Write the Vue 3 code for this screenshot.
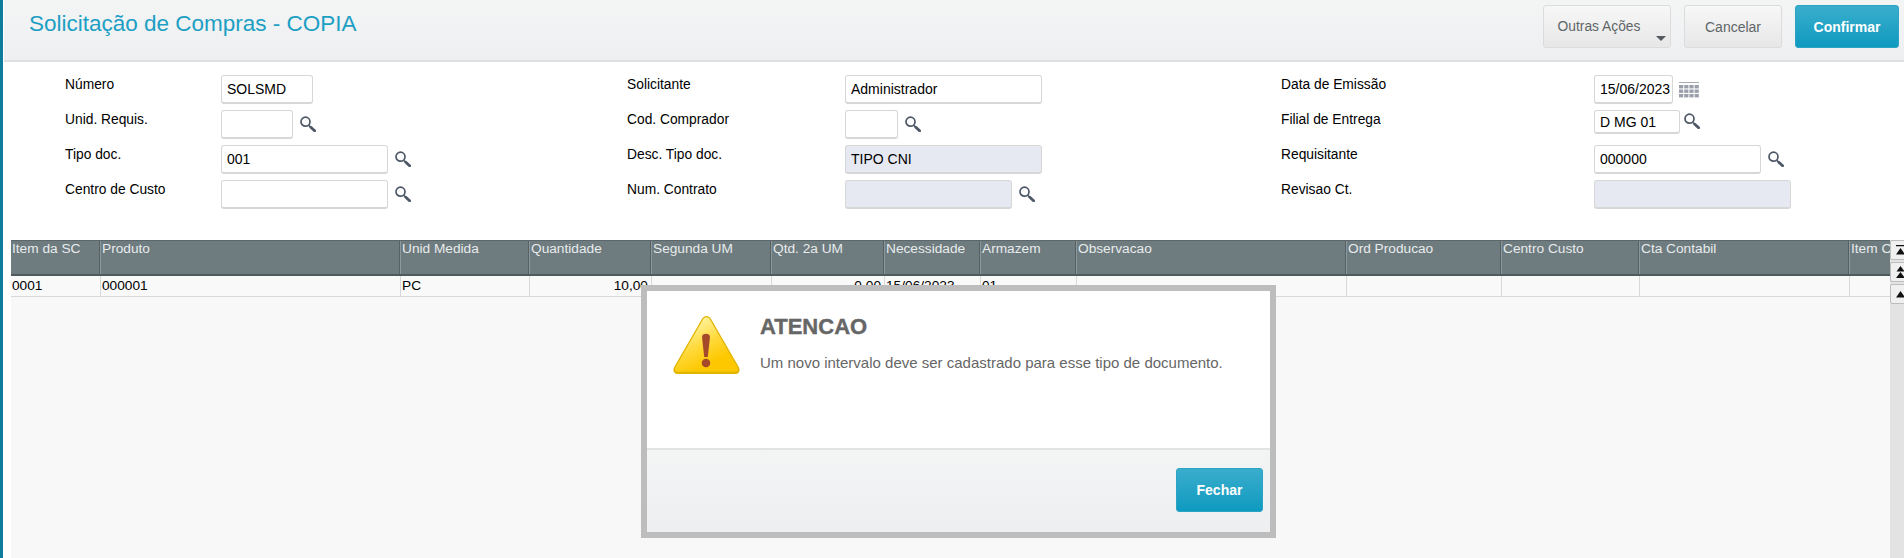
<template>
  <div class="page">
    <div class="side"></div>
    <div class="main">
      <header class="top">
        <h1 class="title">Solicitação de Compras - COPIA</h1>
        <div class="actions">
          <button class="btn more">
            Outras Ações
            <span class="caret"></span>
          </button>
          <button class="btn cancel">Cancelar</button>
          <button class="btn primary confirm">Confirmar</button>
        </div>
      </header>

      <section class="form">
        <div v-for="col in columns" :key="col.name" class="col" :class="col.name">
          <div v-for="f in col.fields" :key="f.label" class="field">
            <label>{{ f.label }}</label>
            <div class="ctl">
              <input
                type="text"
                :class="{ off: f.off, short: f.short }"
                :style="{ width: f.w + 'px' }"
                :value="f.value"
                :readonly="f.off"
              />
              <svg v-if="f.search" class="lens" :class="{ up: f.short }" viewBox="0 0 16 16" width="16" height="16">
                <circle cx="5.500" cy="5.700" r="4.500" fill="#fdfdfe" stroke="#4d5766" stroke-width="1.700" />
                <path d="M8.800 9.400 10.500 11" stroke="#4d5766" stroke-width="1.600" />
                <path d="M10.800 11.200 14.600 14.800" stroke="#4d5766" stroke-width="2.800" stroke-linecap="round" />
              </svg>
              <svg v-if="f.calendar" class="cal" viewBox="0 0 20 16" width="20" height="16">
                <rect x="0" y="0" width="20" height="1" fill="#a6aab5" />
                <g fill="#9a9fab">
                  <template v-for="r in [3, 7.5, 12]" :key="r">
                    <rect v-for="c in [0, 5.2, 10.4, 15.6]" :key="c" :x="c" :y="r" width="4.2" height="3.4" />
                  </template>
                </g>
              </svg>
            </div>
          </div>
        </div>
      </section>

      <section class="grid-wrap">
        <div class="grid">
          <div class="row head">
            <div v-for="c in gridCols" :key="c.t" class="cell">{{ c.t }}</div>
          </div>
          <div class="row body">
            <div v-for="c in gridCols" :key="c.t" class="cell" :class="{ num: c.num }">{{ c.v }}</div>
          </div>
        </div>
        <div class="scroll">
          <button class="sb">
            <svg viewBox="0 0 9 10" width="9" height="10"><path d="M0 0h9v1.300H0zM4.500 3 9 9.500H0z" fill="#111" /></svg>
          </button>
          <button class="sb">
            <svg viewBox="0 0 9 12" width="9" height="12"><path d="M4.500 0 8.500 5.500h-8zM4.500 6 9 12H0z" fill="#111" /></svg>
          </button>
          <button class="sb">
            <svg viewBox="0 0 9 7" width="9" height="7"><path d="M4.500 0 9 6.500H0z" fill="#111" /></svg>
          </button>
        </div>
      </section>
    </div>

    <div class="modal">
      <div class="modal-body">
        <svg class="warn" viewBox="0 0 67 58" width="67" height="58" preserveAspectRatio="none">
          <defs>
            <linearGradient id="warnFill" x1="0.25" y1="0.1" x2="0.65" y2="0.8">
              <stop offset="0" stop-color="#fff3a0" />
              <stop offset="0.55" stop-color="#ffd93a" />
              <stop offset="1" stop-color="#fdc800" />
            </linearGradient>
          </defs>
          <path d="M33.500 0c2.200 0 3.700 1.300 4.700 3.200L65.800 51c1.800 3.500.4 7-3.300 7H4.500c-3.700 0-5.100-3.500-3.300-7L28.800 3.200C29.800 1.300 31.300 0 33.500 0z" fill="#e2b400" />
          <path d="M33.500 1.300c1.700 0 2.900 1.100 3.700 2.600L64.300 51c1.400 2.700.5 4.800-2.400 4.800H5.100c-2.900 0-3.800-2.100-2.400-4.800L29.800 3.900c.8-1.500 2-2.600 3.700-2.600z" fill="url(#warnFill)" />
          <path d="M29 21c0-2.300 2-3.200 4-3.200s4 .9 4 3.200L34.800 41h-3.600z" fill="#a4492a" />
          <circle cx="33" cy="47" r="4.300" fill="#a4492a" />
        </svg>
        <div class="msg">
          <h2>ATENCAO</h2>
          <p>Um novo intervalo deve ser cadastrado para esse tipo de documento.</p>
        </div>
      </div>
      <div class="modal-foot">
        <button class="btn primary close">Fechar</button>
      </div>
    </div>
  </div>
</template>

<script setup>
const columns = [
  {
    name: 'c1',
    fields: [
      { label: 'Número', value: 'SOLSMD', w: 92 },
      { label: 'Unid. Requis.', value: '', w: 72, search: true },
      { label: 'Tipo doc.', value: '001', w: 167, search: true },
      { label: 'Centro de Custo', value: '', w: 167, search: true }
    ]
  },
  {
    name: 'c2',
    fields: [
      { label: 'Solicitante', value: 'Administrador', w: 197 },
      { label: 'Cod. Comprador', value: '', w: 53, search: true },
      { label: 'Desc. Tipo doc.', value: 'TIPO CNI', w: 197, off: true },
      { label: 'Num. Contrato', value: '', w: 167, off: true, search: true }
    ]
  },
  {
    name: 'c3',
    fields: [
      { label: 'Data de Emissão', value: '15/06/2023', w: 79, calendar: true },
      { label: 'Filial de Entrega', value: 'D MG 01', w: 86, search: true, short: true },
      { label: 'Requisitante', value: '000000', w: 167, search: true },
      { label: 'Revisao Ct.', value: '', w: 197, off: true }
    ]
  }
]

const gridCols = [
  { t: 'Item da SC', v: '0001' },
  { t: 'Produto', v: '000001' },
  { t: 'Unid Medida', v: 'PC' },
  { t: 'Quantidade', v: '10,00', num: true },
  { t: 'Segunda UM', v: '' },
  { t: 'Qtd. 2a UM', v: '0,00', num: true },
  { t: 'Necessidade', v: '15/06/2023' },
  { t: 'Armazem', v: '01' },
  { t: 'Observacao', v: '' },
  { t: 'Ord Producao', v: '' },
  { t: 'Centro Custo', v: '' },
  { t: 'Cta Contabil', v: '' },
  { t: 'Item C', v: '' }
]
</script>

<style>
html,
body {
  margin: 0;
  background: #fff;
  overflow: hidden;
}
</style>

<style scoped>
.page {
  position: relative;
  display: flex;
  height: 558px;
  font-family: "Liberation Sans", Arial, sans-serif;
  font-size: 14px;
  color: #000;
  overflow: hidden;
}

.side {
  width: 3px;
  background: #0e7c9b;
  margin-right: 1px;
  flex: none;
}

.main {
  flex: 1;
  min-width: 0;
  display: flex;
  flex-direction: column;
}

.top {
  display: flex;
  justify-content: space-between;
  height: 60px;
  border-bottom: 2px solid #dfe0e0;
  background: linear-gradient(#f3f5f5, #eeeff1);
}

.title {
  margin: 10px 0 0 25px;
  font-size: 22.500px;
  font-weight: 400;
  line-height: 28px;
  color: #1d9fc4;
}

.actions {
  display: flex;
  gap: 13px;
  padding: 5px 5px 0 0;
}

.btn {
  height: 43px;
  box-sizing: border-box;
  border: 1px solid #dcdcdc;
  border-radius: 3px;
  background: linear-gradient(#f7f7f7, #e7e7e7);
  color: #5f6668;
  font-family: inherit;
  font-size: 14px;
  padding: 0;
}

.btn.more {
  position: relative;
  width: 128px;
  padding-right: 16px;
  font-size: 13.800px;
}

.caret {
  position: absolute;
  right: 4px;
  bottom: 6px;
  border-left: 5px solid transparent;
  border-right: 5px solid transparent;
  border-top: 5px solid #555a60;
}

.btn.cancel {
  width: 98px;
}

.btn.primary {
  border: 1px solid #2aa3c4;
  background: linear-gradient(#3aadcc, #0f9ac0);
  color: #fff;
  font-weight: 700;
}

.btn.confirm {
  width: 104px;
}

.form {
  display: flex;
  padding: 13px 0 0 61px;
  height: 178px;
  box-sizing: border-box;
}

.col {
  display: flex;
  flex-direction: column;
  gap: 6px;
}

.c1 {
  width: 562px;
  --label: 156px;
}

.c2 {
  width: 654px;
  --label: 218px;
}

.c3 {
  --label: 313px;
}

.field {
  display: flex;
  height: 29px;
}

.field label {
  width: var(--label);
  flex: none;
  font-size: 13.800px;
  line-height: 20px;
}

.ctl {
  display: flex;
  align-items: center;
  gap: 7px;
}

.ctl input {
  height: 29px;
  box-sizing: border-box;
  border: 1px solid #d7d7d7;
  border-bottom-width: 2px;
  border-radius: 3px;
  padding: 0 0 0 5px;
  font-family: inherit;
  font-size: 14px;
  color: #000;
  background: #fff;
  outline: none;
}

.ctl input.short {
  height: 24px;
  align-self: flex-start;
}

.ctl input.off {
  background: #e6e9f1;
}

.lens {
  flex: none;
  margin-top: -1px;
}

.lens.up {
  align-self: flex-start;
  margin-top: 3px;
  margin-left: -3px;
}

.cal {
  flex: none;
  margin-left: -1px;
  margin-top: 1px;
}

.grid-wrap {
  flex: 1;
  display: flex;
  margin-left: 7px;
  background: #f8f8f8;
}

.grid {
  width: 1879px;
  overflow: hidden;
  flex: none;
}

.row {
  display: grid;
  grid-template-columns: 89px 300px 129px 122px 120px 113px 96px 96px 270px 155px 138px 210px 41px;
  font-size: 13.700px;
}

.row.head {
  height: 36px;
  box-sizing: border-box;
  background: #6e7b7f;
  border-top: 1px solid #5b676b;
  border-bottom: 2px solid #4f5a5d;
  color: #e8ecec;
}

.row.head .cell {
  padding: 0 0 0 1px;
  border-left: 1px solid #8d989b;
  box-shadow: -1px 0 0 #566165;
  white-space: nowrap;
  overflow: hidden;
  line-height: 16px;
}

.row.head .cell:first-child {
  border-left: 0;
  box-shadow: none;
}

.row.body {
  height: 21px;
  box-sizing: border-box;
  background: #f9f9f9;
  border-bottom: 1px solid #d8d8d8;
}

.row.body .cell {
  border-left: 1px solid #d8d8d8;
  padding: 1px 3px 0 1px;
  line-height: 18px;
  white-space: nowrap;
  overflow: hidden;
}

.row.body .cell:first-child {
  border-left: 0;
}

.row.body .cell.num {
  text-align: right;
}

.scroll {
  flex: 1;
  display: flex;
  flex-direction: column;
  gap: 2px;
  background: #e3e3e3;
  overflow: hidden;
  min-width: 0;
}

.sb {
  width: 24px;
  height: 20px;
  padding: 0 0 0 5px;
  border: 1px solid #bdbdbd;
  border-radius: 2px;
  background: #f0f0f0;
  box-sizing: border-box;
  flex: none;
  display: flex;
  align-items: center;
}

.modal {
  position: absolute;
  left: 641px;
  top: 285px;
  width: 635px;
  height: 253px;
  box-sizing: border-box;
  border: 6px solid #bdbdbd;
  background: #fff;
  display: flex;
  flex-direction: column;
}

.modal-body {
  flex: 1;
  display: flex;
  padding: 25px 0 0 26px;
  min-height: 0;
}

.warn {
  flex: none;
}

.msg {
  margin: -1px 0 0 20px;
  color: #666;
}

.msg h2 {
  margin: 0;
  font-size: 22px;
  font-weight: 700;
  line-height: 24px;
  -webkit-text-stroke: 0.4px #666;
}

.msg p {
  margin: 15px 0 0;
  font-size: 15px;
  line-height: 18px;
}

.modal-foot {
  flex: none;
  height: 84px;
  box-sizing: border-box;
  border-top: 2px solid #e2e3e3;
  background: linear-gradient(#f3f4f4, #eeeff1);
  display: flex;
  justify-content: flex-end;
  padding: 18px 7px 0 0;
}

.btn.close {
  width: 87px;
  height: 44px;
}
</style>
